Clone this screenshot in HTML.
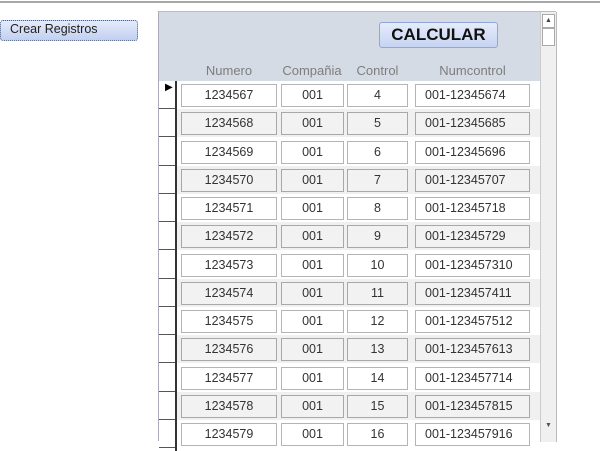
<!DOCTYPE html>
<html><head><meta charset="utf-8"><style>
*{margin:0;padding:0;box-sizing:border-box}
body{width:600px;height:437px;overflow:hidden;background:#fff;font-family:"Liberation Sans",sans-serif;position:relative}
.topline{position:absolute;left:0;top:1px;width:600px;height:2px;background:#a8a8a8}
.crear{position:absolute;left:0;top:20px;width:138px;height:21px;border:1px dotted #4a5a80;border-radius:3px;background:linear-gradient(#e4ebfa,#c2d0f0);font-size:12.5px;color:#222;padding:1px 0 0 9px}
.form{position:absolute;left:158px;top:11px;width:398px;height:430px;border-left:1px solid #aab;border-top:1px solid #b8bcc4}
.hdr{position:absolute;left:0;top:0;width:381px;height:69px;background:#d5dbe5}
.calc{position:absolute;left:220px;top:10px;width:119px;height:26px;border:1px solid #8fa8d8;border-radius:3px;background:linear-gradient(#e6ecfb,#c6d4f2);font-weight:bold;font-size:17px;text-align:center;line-height:24px;color:#111}
.lab{position:absolute;top:51px;font-size:13px;color:#7d7d7d;text-align:center}
.sb{position:absolute;left:381px;top:0;width:17px;height:430px;background:#f0f0f0;border-left:1px solid #ccc;border-right:1px solid #bbb}
.up{position:absolute;left:1px;top:2px;width:13px;height:14px;background:#fff;border:1px solid #aaa;font-size:7px;text-align:center;line-height:12px;color:#444}
.th{position:absolute;left:1px;top:16px;width:13px;height:18px;background:#fff;border:1px solid #aaa}
.dn{position:absolute;left:1px;top:408px;width:13px;height:13px;font-size:7px;text-align:center;line-height:12px;color:#555}
.row{position:absolute;left:0;width:381px;height:28px}
.row.alt .bg{background:#f0f0f0}
.bg{position:absolute;left:18px;top:0;width:363px;height:28px}
.sel{position:absolute;left:0;top:0;width:17px;height:28px;border-bottom:1px solid #555;background:#fff}
.vline{position:absolute;left:16px;top:69px;width:2px;height:370px;background:#333}
.b{position:absolute;top:3px;height:23px;border:1px solid #b4b4b4;background:#fff;font-size:12.5px;color:#333;text-align:center;line-height:21px}
.alt .b{background:#f2f2f2;border-color:#a8a8a8}
.n{left:22px;width:96px}.c{left:122px;width:63px}.k{left:188px;width:61px}.m{left:256px;width:115px;text-align:left;padding-left:9px}
</style></head><body>
<div class="topline"></div>
<div class="crear">Crear Registros</div>
<div class="form">
<div class="hdr">
<div class="calc">CALCULAR</div>
<div class="lab" style="left:22px;width:96px">Numero</div>
<div class="lab" style="left:118px;width:70px">Compañia</div>
<div class="lab" style="left:188px;width:61px">Control</div>
<div class="lab" style="left:256px;width:115px">Numcontrol</div>
</div>
<div class="row" style="top:69px"><div class="bg"></div><div class="sel"><span style="position:absolute;left:6px;top:1px;font-size:10px">&#9654;</span></div><div class="b n">1234567</div><div class="b c">001</div><div class="b k">4</div><div class="b m">001-12345674</div></div>
<div class="row alt" style="top:97px"><div class="bg"></div><div class="sel"></div><div class="b n">1234568</div><div class="b c">001</div><div class="b k">5</div><div class="b m">001-12345685</div></div>
<div class="row" style="top:126px"><div class="bg"></div><div class="sel"></div><div class="b n">1234569</div><div class="b c">001</div><div class="b k">6</div><div class="b m">001-12345696</div></div>
<div class="row alt" style="top:154px"><div class="bg"></div><div class="sel"></div><div class="b n">1234570</div><div class="b c">001</div><div class="b k">7</div><div class="b m">001-12345707</div></div>
<div class="row" style="top:182px"><div class="bg"></div><div class="sel"></div><div class="b n">1234571</div><div class="b c">001</div><div class="b k">8</div><div class="b m">001-12345718</div></div>
<div class="row alt" style="top:210px"><div class="bg"></div><div class="sel"></div><div class="b n">1234572</div><div class="b c">001</div><div class="b k">9</div><div class="b m">001-12345729</div></div>
<div class="row" style="top:239px"><div class="bg"></div><div class="sel"></div><div class="b n">1234573</div><div class="b c">001</div><div class="b k">10</div><div class="b m">001-123457310</div></div>
<div class="row alt" style="top:267px"><div class="bg"></div><div class="sel"></div><div class="b n">1234574</div><div class="b c">001</div><div class="b k">11</div><div class="b m">001-123457411</div></div>
<div class="row" style="top:295px"><div class="bg"></div><div class="sel"></div><div class="b n">1234575</div><div class="b c">001</div><div class="b k">12</div><div class="b m">001-123457512</div></div>
<div class="row alt" style="top:323px"><div class="bg"></div><div class="sel"></div><div class="b n">1234576</div><div class="b c">001</div><div class="b k">13</div><div class="b m">001-123457613</div></div>
<div class="row" style="top:352px"><div class="bg"></div><div class="sel"></div><div class="b n">1234577</div><div class="b c">001</div><div class="b k">14</div><div class="b m">001-123457714</div></div>
<div class="row alt" style="top:380px"><div class="bg"></div><div class="sel"></div><div class="b n">1234578</div><div class="b c">001</div><div class="b k">15</div><div class="b m">001-123457815</div></div>
<div class="row" style="top:408px"><div class="bg"></div><div class="sel"></div><div class="b n">1234579</div><div class="b c">001</div><div class="b k">16</div><div class="b m">001-123457916</div></div>
<div class="vline"></div>
<div class="sb"><div class="up">&#9650;</div><div class="th"></div><div class="dn">&#9660;</div></div>
</div>
</body></html>
